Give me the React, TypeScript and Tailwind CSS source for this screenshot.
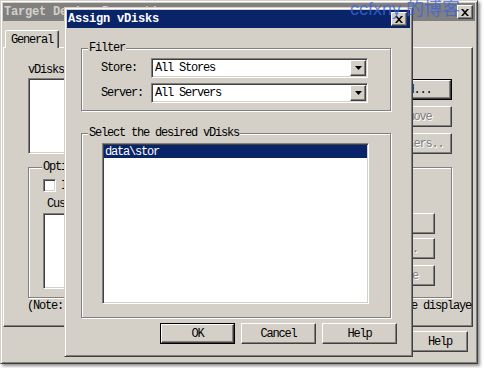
import React from "react";

const raised =
  "border border-t-white border-l-white border-r-[#404040] border-b-[#404040] shadow-[inset_-1px_-1px_0_#808080]";
const frame =
  "border border-t-[#d4d0c8] border-l-[#d4d0c8] border-r-[#404040] border-b-[#404040] shadow-[inset_1px_1px_0_#ffffff,inset_-1px_-1px_0_#808080]";
const sunken =
  "border border-t-[#808080] border-l-[#808080] border-r-white border-b-white shadow-[inset_1px_1px_0_#404040,inset_-1px_-1px_0_#d4d0c8]";
const etched = "border border-[#808080] shadow-[1px_1px_0_#ffffff,inset_1px_1px_0_#ffffff]";
const disabledText = "text-[#808080] [text-shadow:1px_1px_0_#ffffff]";

function Btn({
  label,
  w,
  isDefault,
  disabled,
}: {
  label: string;
  w: string;
  isDefault?: boolean;
  disabled?: boolean;
}) {
  const face = (
    <div className={`${raised} bg-[#d4d0c8] h-full w-full flex items-center justify-center`}>
      <span className={`whitespace-nowrap ${disabled ? disabledText : "text-black"}`}>{label}</span>
    </div>
  );
  if (isDefault) {
    return <div className={`border border-black h-[21px] shrink-0 ${w}`}>{face}</div>;
  }
  return <div className={`h-[21px] shrink-0 ${w}`}>{face}</div>;
}

function CloseBtn() {
  return (
    <div className={`${raised} bg-[#d4d0c8] w-[16px] h-[14px] flex items-center justify-center`}>
      <svg width="8" height="7" viewBox="0 0 8 7">
        <path d="M0 0h2l2 2.3L6 0h2L5 3.5 8 7H6L4 4.7 2 7H0l3-3.5z" fill="#000" />
      </svg>
    </div>
  );
}

function Legend({ children, ml }: { children: React.ReactNode; ml: string }) {
  return (
    <div className={`-mt-[7px] ${ml} w-fit px-px bg-[#d4d0c8] leading-[12px] whitespace-nowrap`}>
      {children}
    </div>
  );
}

function Combo({ value }: { value: string }) {
  return (
    <div className={`${sunken} bg-white w-[217px] h-[20px] p-px flex items-center`}>
      <span className="flex-1 pl-[2px] whitespace-nowrap">{value}</span>
      <div className={`${raised} bg-[#d4d0c8] w-[16px] h-[16px] flex items-center justify-center`}>
        <svg width="7" height="4" viewBox="0 0 7 4">
          <path d="M0 0h7L3.5 4z" fill="#000" />
        </svg>
      </div>
    </div>
  );
}

function TargetWindow() {
  return (
    <div className="absolute left-0 top-0 w-[478px] h-[364px] border border-t-[#d4d0c8] border-l-[#d4d0c8] border-r-[#404040] border-b-[#404040] shadow-[inset_1px_1px_0_#ffffff,inset_-1px_-1px_0_#808080,2px_2px_3px_rgba(0,0,0,0.45)] bg-[#d4d0c8] p-[2px] flex flex-col">
      {/* inactive title bar */}
      <div className="h-[18px] bg-[#808080] flex items-center justify-between pl-[1px] pr-[2px]">
        <span className="font-bold tracking-[-0.2px] text-[#d4d0c8] whitespace-nowrap">
          Target Device Properties
        </span>
        <CloseBtn />
      </div>

      {/* tab */}
      <div className="ml-[2px] mt-[9px] w-[54px] h-[18px] -mb-px relative z-10 bg-[#d4d0c8] border-t border-l border-r border-t-white border-l-white border-r-[#404040] rounded-t-[2px] shadow-[inset_-1px_0_0_#808080] flex items-center justify-center">
        General
      </div>

      {/* tab page */}
      <div className="w-[470px] h-[280px] overflow-hidden flex flex-col border border-t-white border-l-white border-r-[#404040] border-b-[#404040] shadow-[inset_-1px_-1px_0_#808080]">
        <div className="flex items-start mt-[16px]">
          <div className="ml-[24px] w-[337px] flex flex-col">
            <span className="whitespace-nowrap">vDisks for this Device:</span>
            <div className={`${sunken} bg-white mt-[2px] h-[76px]`} />
          </div>
          <div className="ml-[10px] mt-[15px] flex flex-col gap-[6px]">
            <Btn label="Add..." w="w-[77px]" isDefault />
            <Btn label="Remove" w="w-[77px]" disabled />
            <Btn label="Printers.." w="w-[77px]" disabled />
          </div>
        </div>

        <div className={`${etched} ml-[24px] mt-[13px] w-[424px] h-[131px] flex flex-col`}>
          <Legend ml="ml-[13px]">Options</Legend>
          <div className="flex items-center mt-[6px] ml-[14px]">
            <div className={`${sunken} bg-white w-[13px] h-[13px]`} />
            <span className="ml-[5px] whitespace-nowrap">Include local hard drive as boot device</span>
          </div>
          <span className="mt-[6px] ml-[18px] whitespace-nowrap">Custom args:</span>
          <div className="flex items-start mt-[3px] ml-[14px]">
            <div className={`${sunken} bg-white w-[317px] h-[76px]`} />
            <div className="ml-[5px] flex flex-col">
              <Btn label="Add" w="w-[70px]" />
              <div className="mt-[4px]">
                <Btn label="Edit.." w="w-[70px]" disabled />
              </div>
              <div className="mt-[6px]">
                <Btn label="Remove" w="w-[70px]" disabled />
              </div>
            </div>
          </div>
        </div>

        <span className="mt-[2px] ml-[23px] whitespace-nowrap">
          (Note: Only vDisks with the same platform as this machine will be displayed)
        </span>
      </div>

      <div className="flex justify-end gap-[6px] mt-[4px] pr-[7px]">
        <Btn label="OK" w="w-[75px]" />
        <Btn label="Cancel" w="w-[75px]" />
        <Btn label="Help" w="w-[56px]" />
      </div>
    </div>
  );
}

function AssignDialog() {
  return (
    <div className={`absolute left-[64px] top-[7px] w-[349px] h-[350px] ${frame} bg-[#d4d0c8] p-[2px] flex flex-col`}>
      <div className="h-[18px] bg-[#0a246a] flex items-center justify-between pl-[1px] pr-[3px]">
        <span className="text-white font-bold tracking-[-0.2px] whitespace-nowrap">Assign vDisks</span>
        <CloseBtn />
      </div>

      {/* Filter */}
      <div className={`${etched} ml-[14px] mt-[20px] w-[310px] h-[63px] flex flex-col`}>
        <Legend ml="ml-[6px]">Filter</Legend>
        <div className="flex items-center mt-[4px] pl-[19px]">
          <span className="w-[50px] whitespace-nowrap">Store:</span>
          <Combo value="All Stores" />
        </div>
        <div className="flex items-center mt-[5px] pl-[19px]">
          <span className="w-[50px] whitespace-nowrap">Server:</span>
          <Combo value="All Servers" />
        </div>
      </div>

      {/* vDisk list */}
      <div className={`${etched} ml-[14px] mt-[22px] w-[310px] h-[185px] flex flex-col`}>
        <Legend ml="ml-[6px]">Select the desired vDisks</Legend>
        <div className={`${sunken} bg-white ml-[20px] mt-[4px] w-[267px] h-[161px] p-px`}>
          <div className="bg-[#0a246a] text-white h-[13px] flex items-center pl-[1px]">data\stor</div>
        </div>
      </div>

      <div className="flex gap-[6px] ml-[93px] mt-[5px]">
        <Btn label="OK" w="w-[75px]" isDefault />
        <Btn label="Cancel" w="w-[75px]" />
        <Btn label="Help" w="w-[75px]" />
      </div>
    </div>
  );
}

export default function App() {
  return (
    <div className="relative w-[484px] h-[368px] bg-white overflow-hidden font-['Liberation_Mono',monospace] text-[12px] leading-[12px] tracking-[-1.2px] text-black">
      <TargetWindow />
      <AssignDialog />
      <span className="absolute left-[350px] -top-[1px] text-[18px] leading-[20px] tracking-normal font-['Liberation_Sans','Noto_Sans_CJK_SC',sans-serif] text-[#3d66d6]/80 whitespace-nowrap">
        ccfxny 的博客
      </span>
    </div>
  );
}
